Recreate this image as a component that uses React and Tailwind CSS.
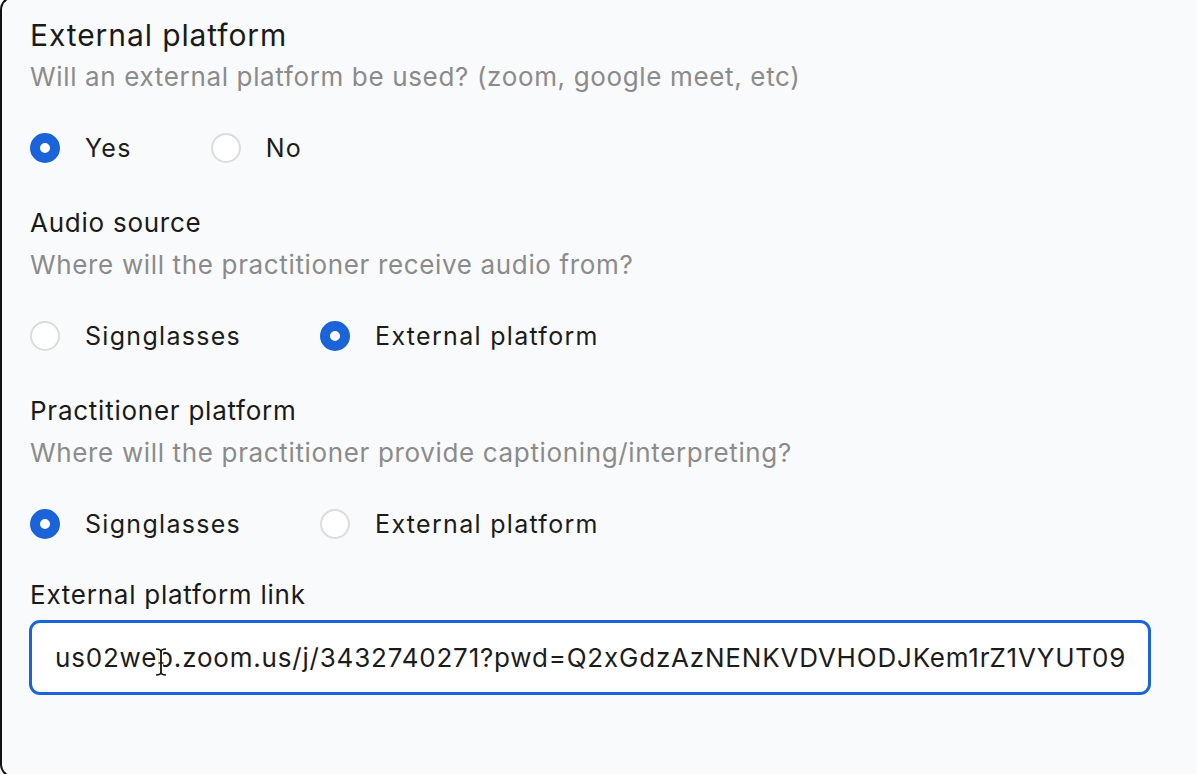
import React from "react";

function Radio({ checked, label }) {
  return (
    <div className="flex items-center gap-[25px]">
      {checked ? (
        <span className="w-[30px] h-[30px] rounded-full border-[10px] border-[#1a63d8] bg-white shrink-0" />
      ) : (
        <span className="w-[30px] h-[30px] rounded-full border-2 border-[#dcdcdc] bg-white shrink-0" />
      )}
      <span className="text-[25px] leading-[30px] tracking-[1.3px] text-[#1c1c1c]">{label}</span>
    </div>
  );
}

function Section({ title, subtitle, options, className = "", titleClass }) {
  return (
    <div className={"flex flex-col " + className}>
      <div className={titleClass}>{title}</div>
      <div className="mt-[6px] text-[26px] leading-[36px] tracking-[0.65px] text-[#8b8b8b]">{subtitle}</div>
      <div className="mt-[38px] flex items-center gap-[79px]">
        {options.map((o) => (
          <Radio key={o.label} checked={o.checked} label={o.label} />
        ))}
      </div>
    </div>
  );
}

const labelClass = "text-[26px] leading-[36px] tracking-[0.75px] text-[#1a1a1a]";

export default function App() {
  return (
    <div
      className="w-[1197px] h-[774px] bg-[#f9fafb] overflow-hidden relative"
      style={{ fontFamily: "Inter, 'Noto Sans', sans-serif" }}
    >
      <div className="absolute left-0 top-[-4px] bottom-[-4px] w-[20px] border-l-2 border-t-2 border-b-2 border-[#111] rounded-l-[14px] pointer-events-none" />
      <div className="pl-[30px] pr-[46px] pt-[17px] flex flex-col">
        <Section
          titleClass="text-[30px] leading-[36px] tracking-[0.9px] text-[#1a1a1a]"
          title="External platform"
          subtitle="Will an external platform be used? (zoom, google meet, etc)"
          options={[
            { label: "Yes", checked: true },
            { label: "No", checked: false },
          ]}
        />
        <Section
          className="mt-[42px]"
          titleClass={labelClass}
          title="Audio source"
          subtitle="Where will the practitioner receive audio from?"
          options={[
            { label: "Signglasses", checked: false },
            { label: "External platform", checked: true },
          ]}
        />
        <Section
          className="mt-[42px]"
          titleClass={labelClass}
          title="Practitioner platform"
          subtitle="Where will the practitioner provide captioning/interpreting?"
          options={[
            { label: "Signglasses", checked: true },
            { label: "External platform", checked: false },
          ]}
        />
        <div className={"mt-[38px] " + labelClass}>External platform link</div>
        <div className="mt-[7px] ml-[-1px] relative h-[75px] rounded-[11px] border-[3px] border-[#1a63d8] bg-white flex items-center pl-[23px]">
          <span className="text-[26px] tracking-[0.8px] text-[#1c1c1c] whitespace-nowrap">
            us02web.zoom.us/j/3432740271?pwd=Q2xGdzAzNENKVDVHODJKem1rZ1VYUT09
          </span>
          <svg
            className="absolute left-[120px] top-[24px]"
            width="18"
            height="30"
            viewBox="0 0 18 30"
            fill="none"
          >
            <path d="M4 2 C7 2 9 3 9 5 C9 3 11 2 14 2" stroke="#fff" strokeWidth="4" />
            <path d="M9 5 V25" stroke="#fff" strokeWidth="4" />
            <path d="M4 28 C7 28 9 27 9 25 C9 27 11 28 14 28" stroke="#fff" strokeWidth="4" />
            <path d="M4 2 C7 2 9 3 9 5 C9 3 11 2 14 2" stroke="#111" strokeWidth="1.6" />
            <path d="M9 5 V25" stroke="#111" strokeWidth="1.8" />
            <path d="M4 28 C7 28 9 27 9 25 C9 27 11 28 14 28" stroke="#111" strokeWidth="1.6" />
            <path d="M6.5 16 H11.5" stroke="#111" strokeWidth="1.4" />
          </svg>
        </div>
      </div>
    </div>
  );
}
